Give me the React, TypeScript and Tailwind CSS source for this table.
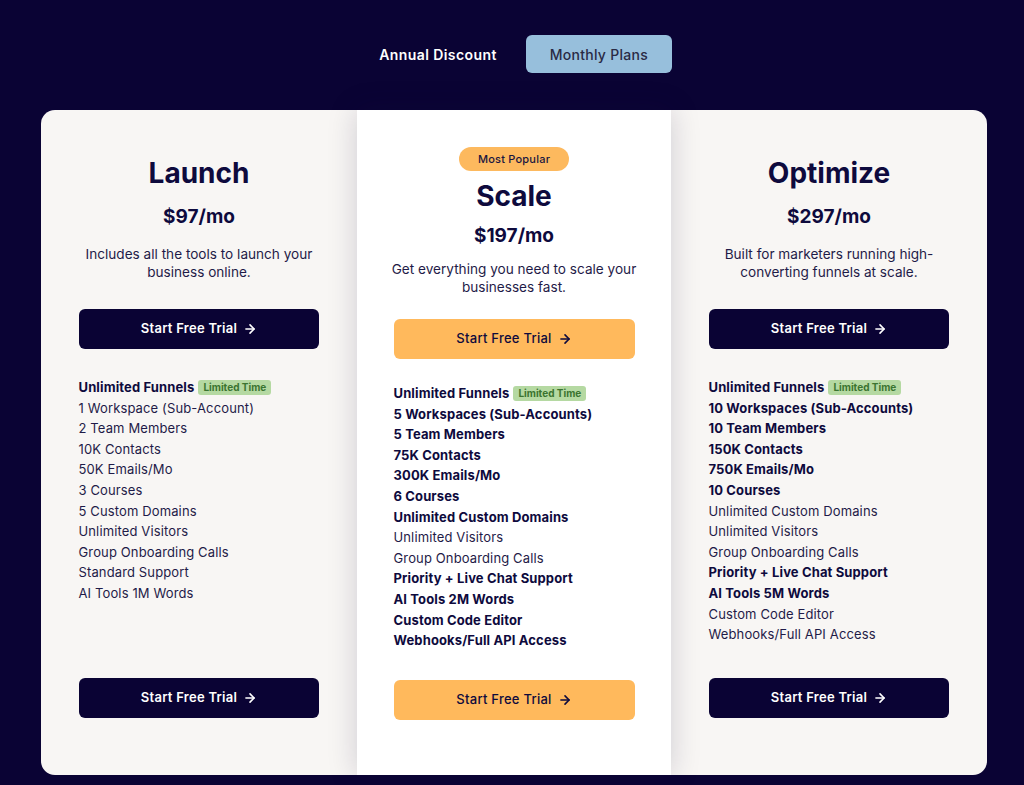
import { ArrowRight } from "lucide-react";

type Feature = { text: string; bold?: boolean; badge?: boolean };

interface Plan {
  name: string;
  price: string;
  desc: string[];
  popular?: boolean;
  features: Feature[];
}

const plans: Plan[] = [
  {
    name: "Launch",
    price: "$97/mo",
    desc: ["Includes all the tools to launch your", "business online."],
    features: [
      { text: "Unlimited Funnels", bold: true, badge: true },
      { text: "1 Workspace (Sub-Account)" },
      { text: "2 Team Members" },
      { text: "10K Contacts" },
      { text: "50K Emails/Mo" },
      { text: "3 Courses" },
      { text: "5 Custom Domains" },
      { text: "Unlimited Visitors" },
      { text: "Group Onboarding Calls" },
      { text: "Standard Support" },
      { text: "AI Tools 1M Words" },
    ],
  },
  {
    name: "Scale",
    price: "$197/mo",
    popular: true,
    desc: ["Get everything you need to scale your", "businesses fast."],
    features: [
      { text: "Unlimited Funnels", bold: true, badge: true },
      { text: "5 Workspaces (Sub-Accounts)", bold: true },
      { text: "5 Team Members", bold: true },
      { text: "75K Contacts", bold: true },
      { text: "300K Emails/Mo", bold: true },
      { text: "6 Courses", bold: true },
      { text: "Unlimited Custom Domains", bold: true },
      { text: "Unlimited Visitors" },
      { text: "Group Onboarding Calls" },
      { text: "Priority + Live Chat Support", bold: true },
      { text: "AI Tools 2M Words", bold: true },
      { text: "Custom Code Editor", bold: true },
      { text: "Webhooks/Full API Access", bold: true },
    ],
  },
  {
    name: "Optimize",
    price: "$297/mo",
    desc: ["Built for marketers running high-", "converting funnels at scale."],
    features: [
      { text: "Unlimited Funnels", bold: true, badge: true },
      { text: "10 Workspaces (Sub-Accounts)", bold: true },
      { text: "10 Team Members", bold: true },
      { text: "150K Contacts", bold: true },
      { text: "750K Emails/Mo", bold: true },
      { text: "10 Courses", bold: true },
      { text: "Unlimited Custom Domains" },
      { text: "Unlimited Visitors" },
      { text: "Group Onboarding Calls" },
      { text: "Priority + Live Chat Support", bold: true },
      { text: "AI Tools 5M Words", bold: true },
      { text: "Custom Code Editor" },
      { text: "Webhooks/Full API Access" },
    ],
  },
];

function TrialButton({ popular }: { popular?: boolean }) {
  return (
    <button
      className={
        popular
          ? "flex h-10 w-[241px] items-center justify-center gap-1.5 rounded-md bg-[#ffb95c] text-[13px] font-medium tracking-[0.02em] text-[#0e0a3d]"
          : "flex h-10 w-[240px] items-center justify-center gap-1.5 rounded-md bg-[#0a0334] text-[13px] font-semibold tracking-[0.02em] text-white"
      }
    >
      Start Free Trial
      <ArrowRight className="h-3.5 w-3.5" strokeWidth={2.75} />
    </button>
  );
}

function PlanCard({ plan, index }: { plan: Plan; index: number }) {
  const pop = plan.popular;
  let cls = "flex flex-col items-center ";
  if (pop) {
    cls += "relative z-10 w-[314px] bg-white pt-[37px] pb-[55px] shadow-[0_0_28px_rgba(20,15,60,0.18)]";
  } else {
    cls += `w-[316px] bg-[#f8f6f4] pt-[46px] pb-[57px] ${index === 0 ? "rounded-l-[14px]" : "rounded-r-[14px]"}`;
  }

  return (
    <div className={cls}>
      {pop && (
        <span className="flex h-6 w-[110px] items-center justify-center rounded-full bg-[#fdb95e] text-[11px] font-medium tracking-[0.02em] text-[#1a1640]">
          Most Popular
        </span>
      )}
      <h2 className={`text-[28px] font-bold leading-[34px] text-[#0e0a3d] ${pop ? "mt-2" : ""}`}>
        {plan.name}
      </h2>
      <p className={`text-[19px] font-bold leading-[26px] text-[#0e0a3d] ${pop ? "mt-[10px]" : "mt-[14px]"}`}>
        {plan.price}
      </p>
      <p
        className={`text-center text-[13.6px] leading-[18px] text-[#1f1b48] ${pop ? "mt-[11px]" : "mt-[15px]"}`}
      >
        {plan.desc[0]}
        <br />
        {plan.desc[1]}
      </p>
      <div className={pop ? "mt-[23px]" : "mt-[28px]"}>
        <TrialButton popular={pop} />
      </div>
      <ul
        className={`w-[241px] text-[13px] leading-[20.6px] tracking-[0.01em] text-[#1f1b48] ${pop ? "mt-[24px]" : "mt-[28px]"}`}
      >
        {plan.features.map((f) => (
          <li key={f.text} className={`flex items-center gap-1 ${f.bold ? "font-bold text-[#0e0a3d]" : ""}`}>
            {f.text}
            {f.badge && (
              <span className="rounded-[3px] bg-[#b5d9a2] px-[5px] text-[10px] font-bold leading-[15px] tracking-normal text-[#3b7430]">
                Limited Time
              </span>
            )}
          </li>
        ))}
      </ul>
      <div className="mt-auto">
        <TrialButton popular={pop} />
      </div>
    </div>
  );
}

export default function App() {
  return (
    <div
      className="min-h-[785px] bg-[#0a0334] pb-10"
      style={{ fontFamily: "Inter, 'Open Sans', sans-serif" }}
    >
      <div className="flex items-center justify-center gap-[29px] pt-[35px] pl-[27px]">
        <span className="text-[14px] font-semibold tracking-[0.03em] text-white">Annual Discount</span>
        <button className="h-[38px] w-[146px] rounded-md bg-[#97bfdc] text-[14px] font-medium tracking-[0.02em] text-[#2a2a45]">
          Monthly Plans
        </button>
      </div>
      <div className="ml-[41px] mt-[37px] flex h-[665px] w-[946px]">
        {plans.map((p, i) => (
          <PlanCard key={p.name} plan={p} index={i} />
        ))}
      </div>
    </div>
  );
}
